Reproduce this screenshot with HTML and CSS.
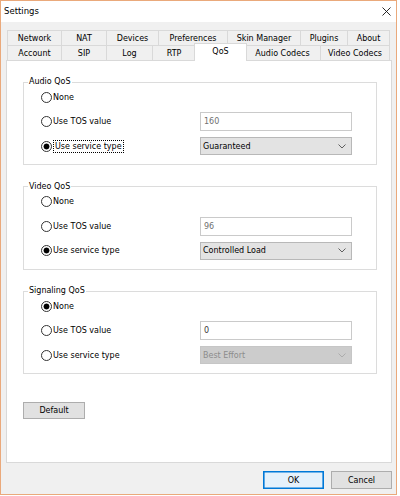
FILE: index.html
```html
<!DOCTYPE html>
<html>
<head>
<meta charset="utf-8">
<title>Settings</title>
<link rel="stylesheet" href="styles.css">
</head>
<body>
<div class="window">
  <div class="titlebar">
    <span class="title">Settings</span>
    <span class="close"><svg width="9" height="9" viewBox="0 0 9 9"><path d="M0.5 0.5L8.5 8.5M8.5 0.5L0.5 8.5" stroke="#111" stroke-width="0.9" fill="none"/></svg></span>
  </div>
  <div class="tabs">
    <div class="tabrow">
      <div class="tab t-network">Network</div>
      <div class="tab t-nat">NAT</div>
      <div class="tab t-devices">Devices</div>
      <div class="tab t-prefs">Preferences</div>
      <div class="tab t-skin">Skin Manager</div>
      <div class="tab t-plugins">Plugins</div>
      <div class="tab t-fill">About</div>
    </div>
    <div class="tabrow">
      <div class="tab t-account">Account</div>
      <div class="tab t-sip">SIP</div>
      <div class="tab t-log">Log</div>
      <div class="tab t-rtp">RTP</div>
      <div class="tab t-qos active">QoS</div>
      <div class="tab t-audio">Audio Codecs</div>
      <div class="tab t-fill">Video Codecs</div>
    </div>
  </div>
  <div class="panel">
    <fieldset class="group">
      <legend>Audio QoS</legend>
      <div class="opts">
        <div class="row"><span class="rlabel"><span class="radio"></span><span class="ltext">None</span></span></div>
        <div class="row"><span class="rlabel"><span class="radio"></span><span class="ltext">Use TOS value</span></span><span class="field dim">160</span></div>
        <div class="row"><span class="rlabel"><span class="radio on"></span><span class="ltext focus">Use service type</span></span><span class="select"><span>Guaranteed</span><svg width="8" height="5" viewBox="0 0 8 5"><path d="M0.5 0.5L4 4L7.5 0.5" stroke="#505050" stroke-width="0.9" fill="none"/></svg></span></div>
      </div>
    </fieldset>
    <fieldset class="group">
      <legend>Video QoS</legend>
      <div class="opts">
        <div class="row"><span class="rlabel"><span class="radio"></span><span class="ltext">None</span></span></div>
        <div class="row"><span class="rlabel"><span class="radio"></span><span class="ltext">Use TOS value</span></span><span class="field dim">96</span></div>
        <div class="row"><span class="rlabel"><span class="radio on"></span><span class="ltext">Use service type</span></span><span class="select"><span>Controlled Load</span><svg width="8" height="5" viewBox="0 0 8 5"><path d="M0.5 0.5L4 4L7.5 0.5" stroke="#505050" stroke-width="0.9" fill="none"/></svg></span></div>
      </div>
    </fieldset>
    <fieldset class="group">
      <legend>Signaling QoS</legend>
      <div class="opts">
        <div class="row"><span class="rlabel"><span class="radio on"></span><span class="ltext">None</span></span></div>
        <div class="row"><span class="rlabel"><span class="radio"></span><span class="ltext">Use TOS value</span></span><span class="field">0</span></div>
        <div class="row"><span class="rlabel"><span class="radio"></span><span class="ltext">Use service type</span></span><span class="select disabled"><span>Best Effort</span><svg width="8" height="5" viewBox="0 0 8 5"><path d="M0.5 0.5L4 4L7.5 0.5" stroke="#a8a8a8" stroke-width="0.9" fill="none"/></svg></span></div>
      </div>
    </fieldset>
    <button class="btn btn-default">Default</button>
  </div>
  <div class="footer">
    <button class="btn btn-ok">OK</button>
    <button class="btn">Cancel</button>
  </div>
</div>
</body>
</html>
```

FILE: styles.css
```css
body {
  margin: 0;
  background: #ffffff;
  font-family: "DejaVu Sans", "Liberation Sans", sans-serif;
  font-size: 8px;
  color: #000;
}

.window {
  width: 397px;
  height: 495px;
  box-sizing: border-box;
  border: 1px solid #eaa97b;
  background: #f0f0f0;
  display: flex;
  flex-direction: column;
}

.titlebar {
  height: 21px;
  flex: none;
  background: #ffffff;
  display: flex;
  align-items: center;
  padding: 0 5px 1px 3px;
  box-sizing: border-box;
}

.title {
  font-size: 8.5px;
}

.close {
  margin-left: auto;
  display: flex;
}

.tabs {
  flex: none;
  margin-top: 8px;
  padding: 0 6px;
}

.tabrow {
  display: flex;
  height: 15px;
}

.tab {
  flex: none;
  box-sizing: border-box;
  border: 1px solid #d9d9d9;
  border-bottom: none;
  margin-left: -1px;
  padding: 0 2px;
  display: flex;
  align-items: center;
  justify-content: center;
  white-space: nowrap;
  background: #f0f0f0;
}

.tab:first-child {
  margin-left: 0;
}

.t-network { width: 55px; }
.t-nat { width: 46px; }
.t-devices { width: 53px; }
.t-prefs { width: 70px; }
.t-skin { width: 74px; }
.t-plugins { width: 48px; }
.t-account { width: 55px; }
.t-sip { width: 46px; }
.t-log { width: 47px; }
.t-rtp { width: 44px; }
.t-qos { width: 53px; }
.t-audio { width: 77px; }
.t-fill { flex: 1 1 auto; }

.tab.active {
  background: #ffffff;
  margin: -2px -2px -1px -2px;
  padding-bottom: 2px;
  position: relative;
  z-index: 1;
}

.panel {
  flex: 1;
  margin: 0 4px 0 5px;
  background: #ffffff;
  border: 1px solid #d9d9d9;
  padding: 16px 14px 0 16px;
  display: flex;
  flex-direction: column;
  gap: 16.5px;
}

.group {
  margin: 0;
  border: 1px solid #dcdcdc;
  padding: 0 0 5.5px 17px;
  min-width: 0;
}

.group legend {
  padding: 0 1px;
  margin-left: -13px;
  line-height: 10px;
}

.opts {
  margin-top: -2px;
  display: flex;
  flex-direction: column;
}

.row {
  height: 24.5px;
  display: grid;
  grid-template-columns: 159px 152px;
  align-items: center;
}

.rlabel {
  display: flex;
  align-items: center;
}

.radio {
  width: 11px;
  height: 11px;
  box-sizing: border-box;
  border: 1px solid #333333;
  border-radius: 50%;
  background: #ffffff;
  margin-right: 1px;
  flex: none;
}

.radio.on {
  background: radial-gradient(circle, #000 0 2.6px, #fff 3.3px);
}

.ltext {
  line-height: 11px;
}

.ltext.focus {
  border: 1px dotted #000;
  padding: 0 1px 0 1px;
}

.field {
  height: 19px;
  box-sizing: border-box;
  border: 1px solid #cacaca;
  background: #ffffff;
  padding: 0 3px;
  display: flex;
  align-items: center;
  color: #3a3a3a;
}

.field.dim {
  color: #707070;
}

.select {
  height: 18px;
  box-sizing: border-box;
  border: 1px solid #b8b8b8;
  background: #e3e3e3;
  padding: 0 5px 0 2px;
  display: flex;
  align-items: center;
  justify-content: space-between;
}

.select.disabled {
  background: #cccccc;
  border-color: #c6c6c6;
  color: #8c8c8c;
}

.btn {
  width: 61px;
  height: 18px;
  box-sizing: border-box;
  border: 1px solid #adadad;
  background: #e1e1e1;
  font: inherit;
  color: #000;
  padding: 0;
  margin: 0;
}

.btn-default {
  align-self: flex-start;
  width: 62px;
  height: 17px;
  margin-top: 11.5px;
}

.btn-ok {
  background: #e5f1fb;
  border-color: #0078d7;
  box-shadow: inset 0 0 0 0.6px #0078d7;
}

.footer {
  flex: none;
  height: 31px;
  box-sizing: border-box;
  padding: 8px 4px 0 0;
  display: flex;
  justify-content: flex-end;
  align-items: flex-start;
  gap: 7px;
}
```
